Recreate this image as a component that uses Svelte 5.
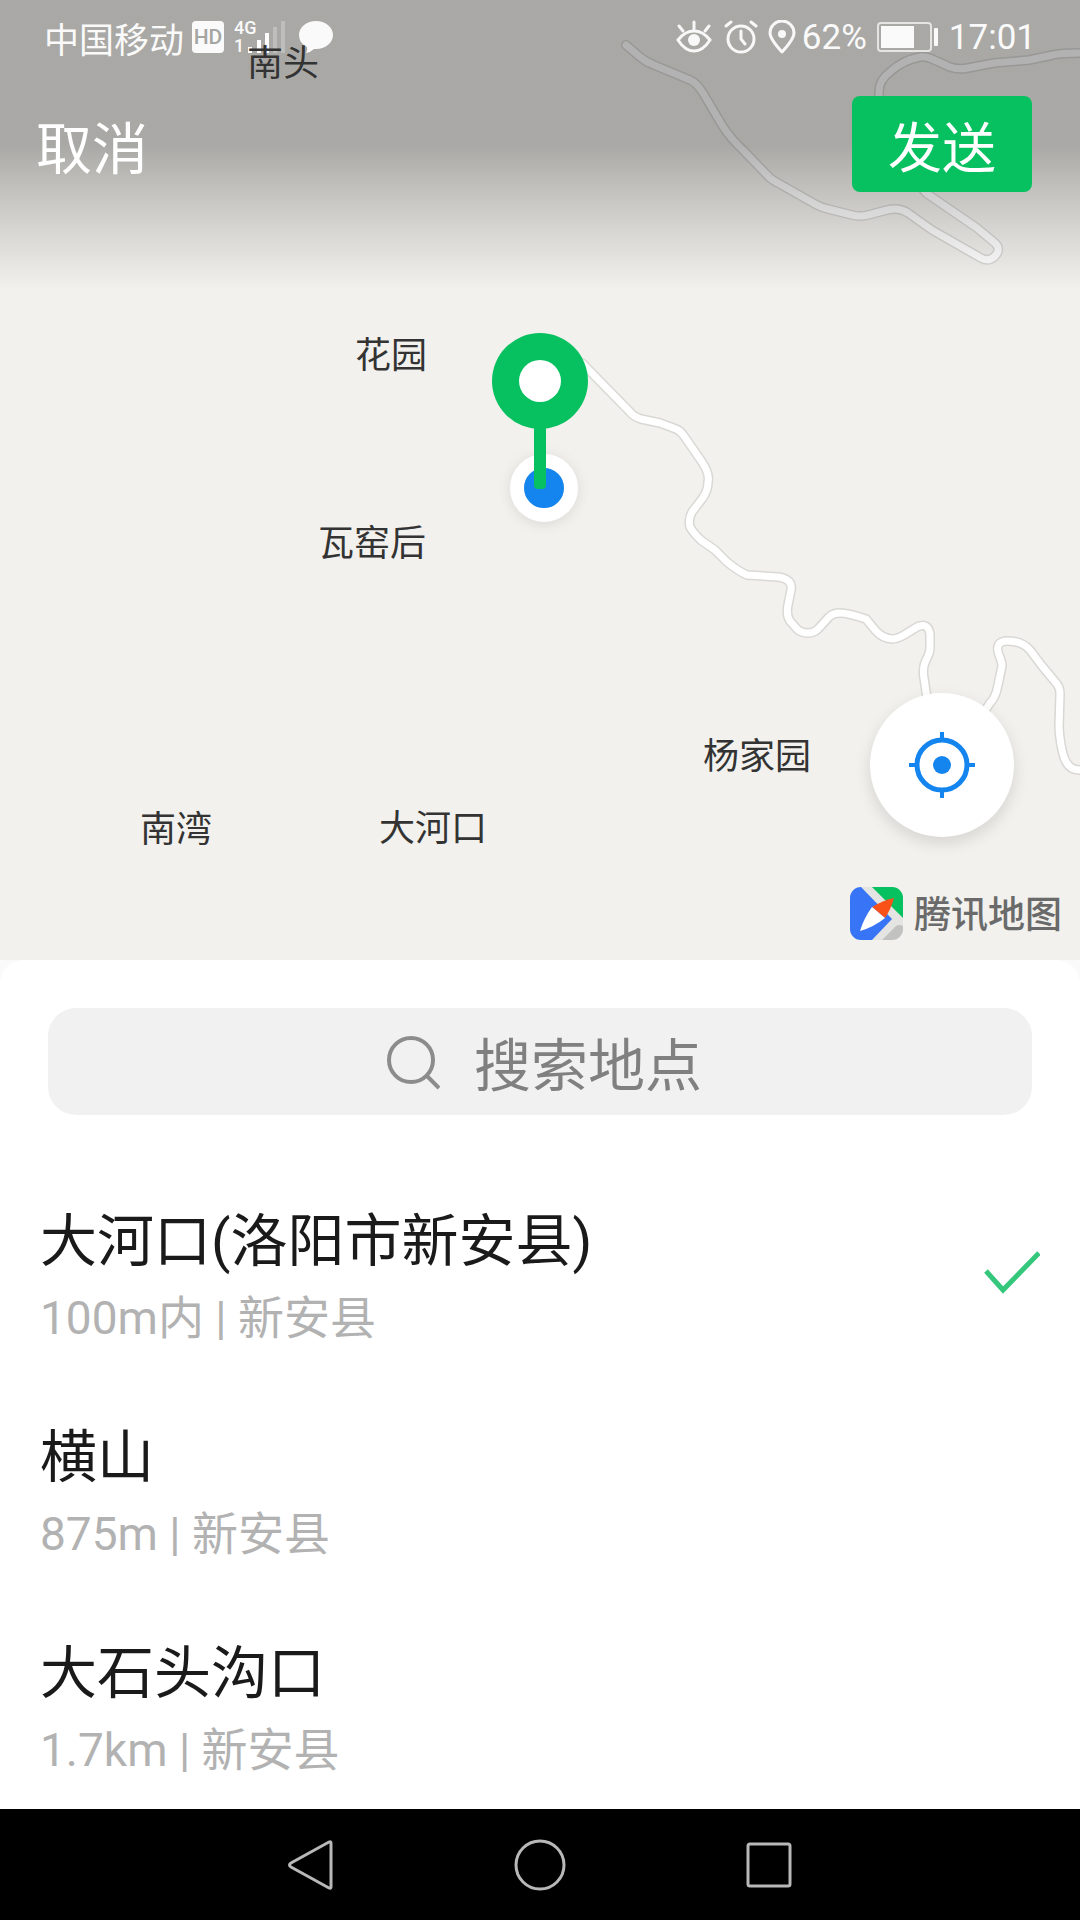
<script lang="ts">
  interface Place {
    id: number;
    name: string;
    distance: string;
    area: string;
  }

  const places: Place[] = [
    { id: 1, name: '大河口(洛阳市新安县)', distance: '100m内', area: '新安县' },
    { id: 2, name: '横山', distance: '875m', area: '新安县' },
    { id: 3, name: '大石头沟口', distance: '1.7km', area: '新安县' },
  ];

  const labels = [
    { text: '南头', x: 283, y: 76 },
    { text: '花园', x: 391, y: 368 },
    { text: '瓦窑后', x: 372, y: 556 },
    { text: '杨家园', x: 757, y: 769 },
    { text: '南湾', x: 176, y: 842 },
    { text: '大河口', x: 433, y: 841 },
  ];

  const roads = [
    'M626 45L640 57Q646 62 654 65L690 80Q697 83 703 93L722 125Q730 138 743 150L769 177Q772 180 778 183L815 204Q820 207 828 209L852 215Q860 217 868 215L887 210Q899 207 908 213L932 230L981 258Q988 262 994 257Q1002 250 995 243L977 228L926 193L890 150Q879 110 879 92Q879 80 890 72Q903 60 920 57Q926 56 932 59L950 67Q958 70 968 68L994 63L1029 60L1053 55Q1060 53 1080 53',
    'M582 363L630 412Q634 417 641 419L660 423L676 429Q681 431 684 436L702 462Q710 474 708 482Q708 491 702 499L692 512Q688 519 690 527Q694 534 702 541L715 550L727 562Q738 571 747 575L778 577Q793 579 791 590L788 605Q786 615 790 621L797 629Q801 633 808 633Q814 633 818 629L829 617Q833 613 840 613Q848 613 866 619L876 631Q882 638 892 639Q897 639 904 635L917 627Q928 622 930 634L930 648Q930 653 926 660Q922 668 924 678L928 705',
    'M984 712L990 703Q996 697 998 685L1002 666Q1002 662 999 655Q994 641 1008 641Q1022 641 1030 650L1042 666L1057 684Q1060 688 1060 694L1059 727Q1060 745 1064 757Q1068 770 1080 770',
  ];

  let selected = $state(1);
  let keyword = $state('');
</script>

<div class="page">
  <section class="map">
    <svg class="layer" viewBox="0 0 1080 960" preserveAspectRatio="xMidYMid slice" aria-hidden="true">
      {#each roads as d}
        <path class="road-edge" {d} />
        <path class="road" {d} />
      {/each}
    </svg>

    <header class="top">
      <div class="status">
        <span class="carrier">中国移动</span>
        <span class="hd">HD</span>
        <span class="network">
          <span>4G</span>
          <span>1</span>
        </span>
        <svg class="signal" width="40" height="32" viewBox="0 0 40 32" fill="#fff" aria-hidden="true">
          <rect x="0" y="26" width="4" height="6" />
          <rect x="9" y="19" width="4" height="13" />
          <rect x="17" y="12" width="4" height="20" />
          <rect x="25" y="6" width="4" height="26" opacity="0.25" />
          <rect x="33" y="0" width="4" height="32" opacity="0.25" />
        </svg>
        <svg class="bubble" width="34" height="34" viewBox="0 0 34 34" fill="#fafafa" aria-hidden="true">
          <path d="M17 1C26 1 34 7 34 15S26 29 17 29L15 29Q12 32 7 33Q9 30 8 27Q0 23 0 15C0 7 8 1 17 1Z" />
        </svg>

        <span class="spacer"></span>

        <svg width="36" height="34" viewBox="0 0 36 34" fill="none" stroke="#f8f8f8" stroke-width="3" stroke-linecap="round" aria-hidden="true">
          <path d="M2 20Q9 11 18 11T34 20Q27 31 18 31T2 20Z" />
          <circle cx="18" cy="20" r="6" fill="#f8f8f8" stroke="none" />
          <path d="M18 2V9M3 6L7 11M33 6L29 11" />
        </svg>
        <svg class="alarm" width="34" height="34" viewBox="0 0 34 34" fill="none" stroke="#f8f8f8" stroke-width="3" stroke-linecap="round" aria-hidden="true">
          <circle cx="17" cy="19" r="13" />
          <path d="M17 11V19L21 24M2 6L7 2M32 6L27 2" />
        </svg>
        <svg class="place" width="28" height="34" viewBox="0 0 28 34" fill="none" stroke="#f8f8f8" stroke-width="3" aria-hidden="true">
          <path d="M14 32Q2 19 2 13A12 12 0 0 1 26 13Q26 19 14 32Z" stroke-linejoin="round" />
          <circle cx="14" cy="14" r="4" fill="#f8f8f8" stroke="none" />
        </svg>
        <span>62%</span>
        <svg class="battery" width="62" height="30" viewBox="0 0 62 30" aria-hidden="true">
          <rect x="1" y="1" width="53" height="28" rx="3" fill="none" stroke="#e4e4e2" stroke-width="2" />
          <rect x="4" y="4" width="33" height="22" fill="#fafafa" />
          <rect x="57" y="6" width="4" height="18" rx="1" fill="#fafafa" />
        </svg>
        <span>17:01</span>
      </div>
      <div class="actions">
        <button class="cancel">取消</button>
        <button class="send">发送</button>
      </div>
    </header>

    <svg class="layer labels" viewBox="0 0 1080 960" preserveAspectRatio="xMidYMid slice">
      {#each labels as label}
        <text x={label.x} y={label.y}>{label.text}</text>
      {/each}
    </svg>

    <span class="here"></span>
    <svg class="pin" width="96" height="156" viewBox="0 0 96 156" aria-hidden="true">
      <path d="M42 90H54V152Q54 156 50 156H46Q42 156 42 152Z" fill="#07c160" />
      <circle cx="48" cy="48" r="48" fill="#07c160" />
      <circle cx="48" cy="48" r="21" fill="#fff" />
    </svg>

    <div class="corner">
      <button class="locate" aria-label="定位">
        <svg width="66" height="66" viewBox="0 0 66 66" fill="none" stroke="#1485ee" aria-hidden="true">
          <circle cx="33" cy="33" r="25" stroke-width="5" />
          <circle cx="33" cy="33" r="9" fill="#1485ee" stroke="none" />
          <path d="M33 0V8M33 58V66M0 33H8M58 33H66" stroke-width="4" />
        </svg>
      </button>
      <div class="brand">
        <svg width="53" height="53" viewBox="0 0 53 53" aria-hidden="true">
          <clipPath id="logo"><rect width="53" height="53" rx="11" /></clipPath>
          <g clip-path="url(#logo)">
            <rect width="53" height="53" fill="#e4e4e2" />
            <path d="M0 0H11L42 32L22 53H0Z" fill="#3875f6" />
            <path d="M22 0H53V31Z" fill="#07c160" />
            <path d="M32 53L46 39Q49 37 53 39V53Z" fill="#c2c3c0" />
            <path d="M44 11Q34 13 22 20L35 31Q41 22 44 11Z" fill="#fa5119" />
            <path d="M22 20L35 31Q24 40 10 44Q14 31 22 20Z" fill="#fff" />
          </g>
        </svg>
        <span>腾讯地图</span>
      </div>
    </div>
  </section>

  <main class="sheet">
    <label class="search">
      <svg width="54" height="56" viewBox="0 0 54 56" fill="none" stroke="#8c8c8c" stroke-width="4" aria-hidden="true">
        <circle cx="25" cy="26" r="22" />
        <path d="M41 42L53 54" />
      </svg>
      <input type="text" placeholder="搜索地点" aria-label="搜索地点" bind:value={keyword} />
    </label>

    <ul class="places">
      {#each places as place (place.id)}
        <li>
          <button class="place-row" onclick={() => (selected = place.id)}>
            <span class="info">
              <span class="name">{place.name}</span>
              <span class="detail">{place.distance} | {place.area}</span>
            </span>
            {#if selected === place.id}
              <svg width="58" height="52" viewBox="0 0 58 52" fill="none" stroke="#35c87d" stroke-width="5" aria-hidden="true">
                <path d="M4 20L21 39L57 2" />
              </svg>
            {/if}
          </button>
        </li>
      {/each}
    </ul>
  </main>

  <nav class="system">
    <button aria-label="返回">
      <svg width="52" height="52" viewBox="0 0 52 52"><path d="M44 3Q46 2 46 4V48Q46 50 44 49L6 28Q3 26 6 24Z" /></svg>
    </button>
    <button aria-label="主屏幕">
      <svg width="52" height="52" viewBox="0 0 52 52"><circle cx="26" cy="26" r="24" /></svg>
    </button>
    <button aria-label="最近任务">
      <svg width="52" height="52" viewBox="0 0 52 52"><rect x="5" y="5" width="42" height="42" rx="2" /></svg>
    </button>
  </nav>
</div>

<style>
  :global(body) {
    margin: 0;
    background: #fff;
  }
  .page {
    display: flex;
    flex-direction: column;
    min-height: 100vh;
    background: #fafafa;
    font-family: Roboto, "Noto Sans CJK SC", sans-serif;
    color: #1a1a1a;
  }
  button {
    border: 0;
    padding: 0;
    background: none;
    font: inherit;
    color: inherit;
    cursor: pointer;
  }
  svg {
    display: block;
    flex: none;
  }

  .map {
    position: relative;
    height: 50vh;
    overflow: hidden;
    background: #f2f1ed;
  }
  .layer {
    position: absolute;
    inset: 0;
    width: 100%;
    height: 100%;
  }
  .road-edge,
  .road {
    fill: none;
    stroke: #d9d8d5;
    stroke-width: 10px;
    stroke-linejoin: round;
    stroke-linecap: round;
  }
  .road {
    stroke: #fff;
    stroke-width: 7px;
  }
  .labels {
    pointer-events: none;
  }
  .labels text {
    font-size: 36px;
    fill: #333;
    text-anchor: middle;
  }

  .top {
    position: relative;
    box-sizing: border-box;
    height: 290px;
    background: linear-gradient(rgba(0, 0, 0, 0.3) 50%, rgba(0, 0, 0, 0.22) 62%, rgba(0, 0, 0, 0.12) 78%, rgba(0, 0, 0, 0));
    color: #fff;
  }
  .status {
    display: flex;
    align-items: center;
    height: 74px;
    padding: 0 44px;
    font-size: 35px;
    color: #fafafa;
  }
  .hd {
    width: 32px;
    margin-left: 8px;
    border-radius: 4px;
    background: #fafafa;
    color: #a5a5a2;
    font-size: 21px;
    font-weight: 500;
    line-height: 32px;
    text-align: center;
  }
  .network {
    display: flex;
    flex-direction: column;
    width: 14px;
    margin-left: 10px;
    font-size: 18px;
    font-weight: 500;
    line-height: 18px;
  }
  .bubble {
    margin-left: 11px;
  }
  .spacer {
    flex: 1;
  }
  .alarm {
    margin-left: 12px;
  }
  .battery {
    margin: 0 10px;
  }
  .place {
    margin: 0 6px 0 10px;
  }
  .actions {
    display: flex;
    align-items: center;
    justify-content: space-between;
    padding: 22px 48px 0 36px;
    font-size: 56px;
  }
  .send {
    width: 180px;
    height: 96px;
    border-radius: 8px;
    background: #07c160;
    font-size: 54px;
  }

  .here {
    position: absolute;
    left: calc(50% + 4px);
    top: calc(50% + 8px);
    box-sizing: border-box;
    width: 68px;
    height: 68px;
    margin: -34px;
    border: 14px solid #fff;
    border-radius: 50%;
    background: #1485ee;
    box-shadow: 0 2px 14px rgba(0, 0, 0, 0.1);
  }
  .pin {
    position: absolute;
    left: 50%;
    bottom: calc(50% - 9px);
    margin-left: -48px;
  }
  .corner {
    position: absolute;
    right: 18px;
    bottom: 20px;
    display: flex;
    flex-direction: column;
    align-items: flex-end;
    gap: 50px;
  }
  .locate {
    display: flex;
    align-items: center;
    justify-content: center;
    width: 144px;
    height: 144px;
    margin-right: 48px;
    border-radius: 50%;
    background: #fff;
    box-shadow: 0 6px 16px rgba(0, 0, 0, 0.12);
  }
  .brand {
    display: flex;
    align-items: center;
    gap: 11px;
    height: 53px;
    color: #6a6a6a;
    font-size: 37px;
    font-weight: 500;
    line-height: 53px;
  }
  .brand span {
    padding-top: 4px;
  }

  .sheet {
    flex: 1;
    border-radius: 24px 24px 0 0;
    padding: 48px 48px 0;
    background: #fff;
  }
  .search {
    display: flex;
    align-items: center;
    justify-content: center;
    gap: 34px;
    height: 107px;
    border-radius: 28px;
    background: #f1f1f1;
  }
  .search svg {
    margin-left: 10px;
  }
  .search input {
    width: 230px;
    border: 0;
    padding: 10px 0 0;
    outline: 0;
    background: none;
    font: inherit;
    font-size: 57px;
    line-height: 72px;
    color: #1a1a1a;
  }
  .search input::placeholder {
    color: #808080;
    opacity: 1;
  }
  .places {
    display: grid;
    gap: 74px;
    margin: 91px -8px 0;
    padding: 0;
    list-style: none;
  }
  .place-row {
    display: flex;
    align-items: center;
    justify-content: space-between;
    width: 100%;
    text-align: left;
  }
  .info {
    display: flex;
    flex-direction: column;
    gap: 10px;
  }
  .name {
    font-size: 57px;
    line-height: 72px;
  }
  .detail {
    color: #b2b2b2;
    font-size: 46px;
    line-height: 60px;
  }

  .system {
    display: flex;
    align-items: center;
    justify-content: center;
    gap: 177px;
    height: 111px;
    background: #000;
  }
  .system svg {
    fill: none;
    stroke: #b8b8b8;
    stroke-width: 3px;
  }
</style>
